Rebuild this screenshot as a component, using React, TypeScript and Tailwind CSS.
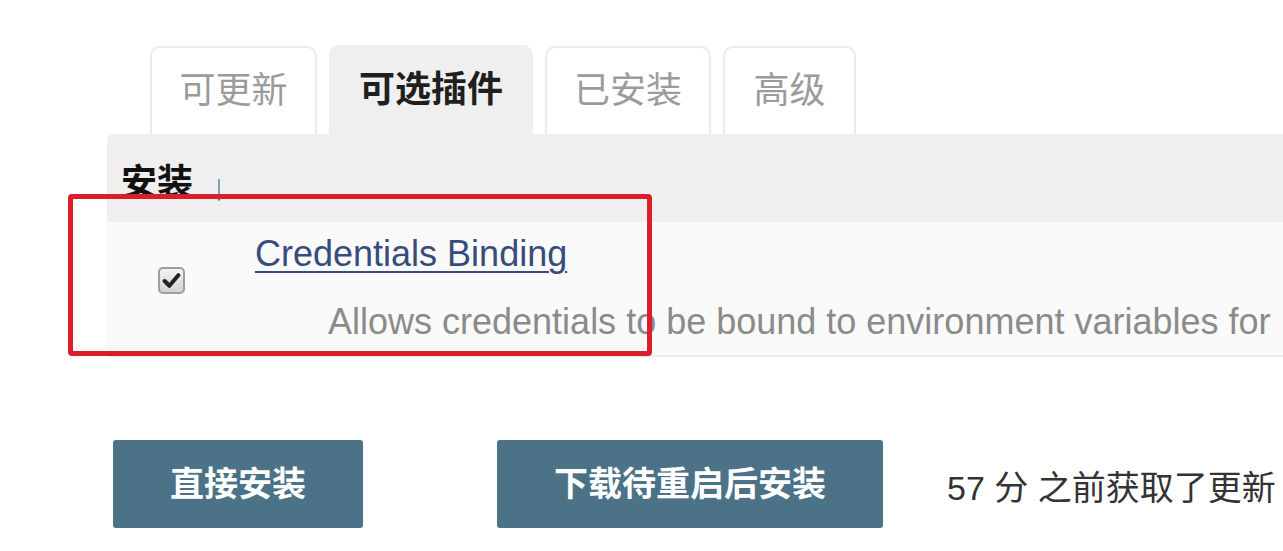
import React from "react";

const font = "font-['Liberation_Sans','Noto_Sans_CJK_SC',sans-serif]";

function Tab({ label, active, width }: { label: string; active?: boolean; width: string }) {
  return (
    <div
      className={
        active
          ? `${width} shrink-0 h-[89px] rounded-t-[10px] bg-[#efefef] flex items-center justify-center text-[36px] font-bold text-[#1f1f1f]`
          : `${width} shrink-0 h-[88px] rounded-t-[10px] border-2 border-b-0 border-[#ececec] bg-white flex items-center justify-center text-[36px] text-[#9b9b9b]`
      }
    >
      {label}
    </div>
  );
}

function Checkbox() {
  return (
    <div className="w-[27px] h-[27px] rounded-[5px] border-2 border-[#9d9d9d] bg-gradient-to-b from-[#f4f4f4] to-[#d2d2d2] flex items-center justify-center">
      <svg width="19" height="17" viewBox="0 0 18 16">
        <path d="M2.5 8.5 L7 13 L15.5 3" fill="none" stroke="#222" strokeWidth="3.8" strokeLinecap="round" strokeLinejoin="round" />
      </svg>
    </div>
  );
}

export default function App() {
  return (
    <div className={`relative w-[1283px] h-[551px] overflow-hidden bg-white ${font}`}>
      <div className="pt-[45px]">
        {/* tabs */}
        <div className="ml-[150px] flex items-end gap-3">
          <Tab label="可更新" width="w-[167px]" />
          <Tab label="可选插件" width="w-[204px]" active />
          <Tab label="已安装" width="w-[166px]" />
          <Tab label="高级" width="w-[133px]" />
        </div>

        {/* table */}
        <div className="ml-[107px]">
          <div className="h-[88px] rounded-tl-[6px] bg-[#efefef] flex items-center pl-[14px] pt-[10px]">
            <span className="text-[36px] font-bold text-[#111] leading-none">安装</span>
            <svg className="ml-[22px] mt-[14px]" width="8" height="24" viewBox="0 0 8 24">
              <path d="M4 1 V22 M1.5 18.5 L4 22 L6.5 18.5" fill="none" stroke="#6f8fae" strokeWidth="1.7" />
            </svg>
          </div>
          <div className="h-[135px] bg-[#fafafa] border-b-2 border-[#ececec] flex">
            <div className="w-[148px] shrink-0 pl-[51px] pt-[45px]">
              <Checkbox />
            </div>
            <div className="pt-[12px] min-w-0">
              <a className="block text-[36px] leading-[40px] text-[#354c7c] underline decoration-2 underline-offset-[5px] whitespace-nowrap">
                Credentials Binding
              </a>
              <div className="mt-[28px] pl-[73px] text-[36px] leading-[40px] text-[#8b8b8b] whitespace-nowrap">
                Allows credentials to be bound to environment variables for
              </div>
            </div>
          </div>
        </div>

        {/* buttons */}
        <div className="mt-[83px] ml-[113px] flex items-center">
          <button className="w-[250px] shrink-0 h-[88px] rounded-[3px] bg-[#4b7287] text-white text-[34px] font-bold">
            直接安装
          </button>
          <button className="ml-[134px] w-[386px] shrink-0 h-[88px] rounded-[3px] bg-[#4b7287] text-white text-[34px] font-bold">
            下载待重启后安装
          </button>
          <span className="ml-[64px] mt-[8px] text-[34px] text-[#333] whitespace-nowrap">57 分 之前获取了更新</span>
        </div>
      </div>

      {/* red highlight */}
      <div className="absolute left-[68px] top-[194px] w-[584px] h-[162px] rounded-[4px] border-[5px] border-[#dc1d2a]" />
    </div>
  );
}
